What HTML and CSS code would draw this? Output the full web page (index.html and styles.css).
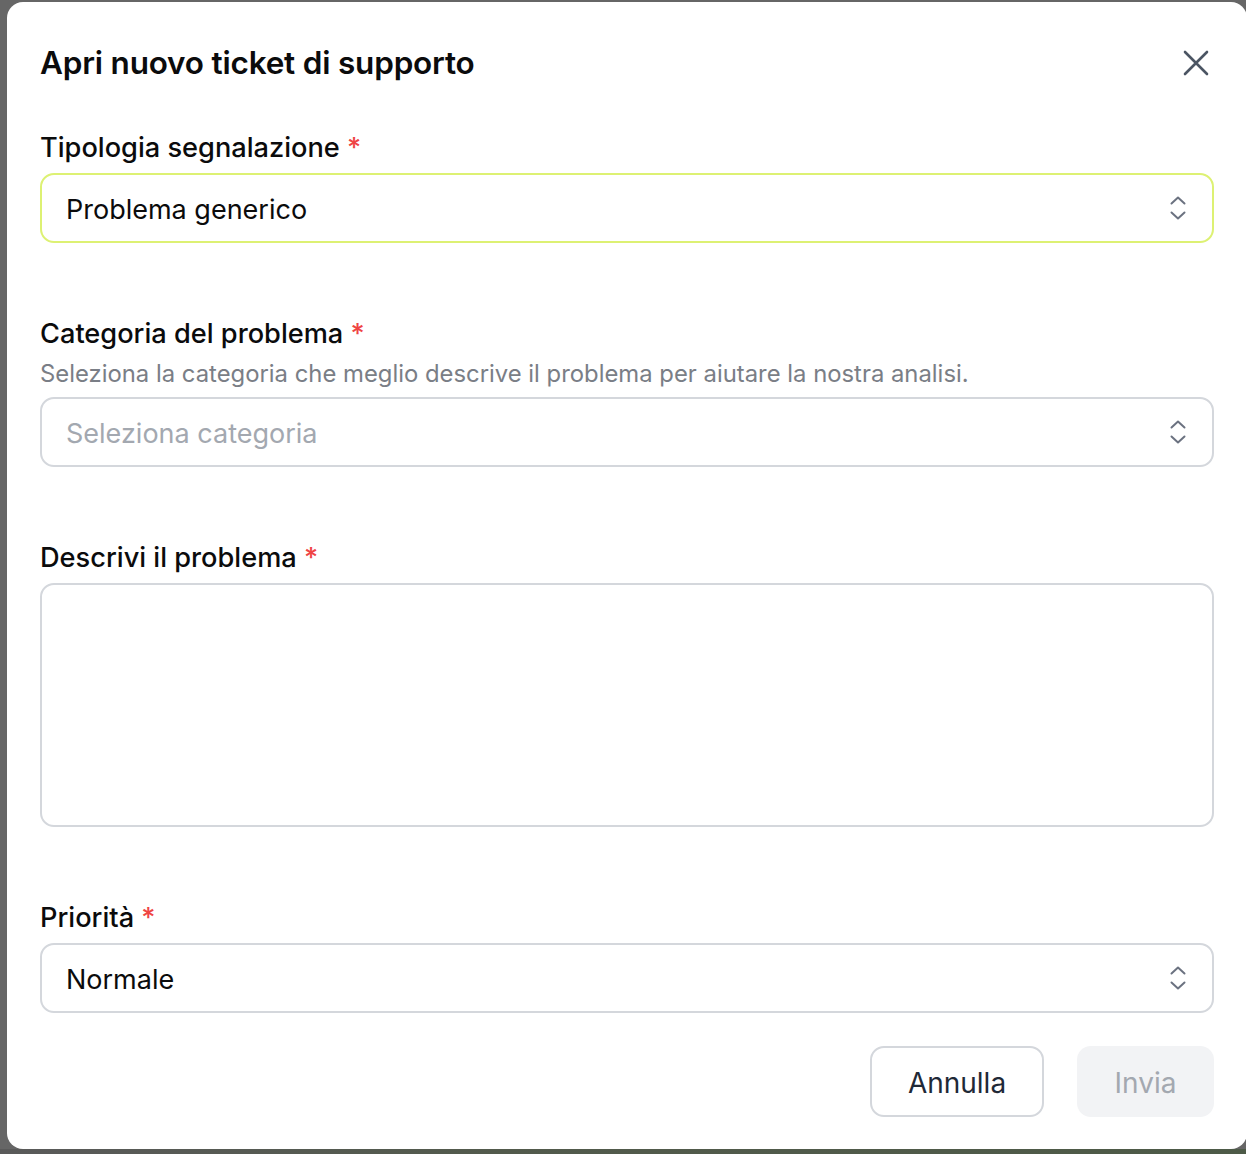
FILE: index.html
```html
<!DOCTYPE html>
<html lang="it">
<head>
<meta charset="utf-8">
<title>Apri nuovo ticket di supporto</title>
<link rel="stylesheet" href="styles.css">
</head>
<body>
<div class="backdrop">
  <div class="modal" role="dialog" aria-labelledby="dlg-title">
    <div class="modal-header">
      <h2 id="dlg-title" class="modal-title">Apri nuovo ticket di supporto</h2>
      <button class="close-btn" aria-label="Chiudi">
        <svg width="26" height="26" viewBox="0 0 26 26" fill="none" stroke="currentColor" stroke-width="2.6" stroke-linecap="round"><path d="M2 2L24 24M24 2L2 24"/></svg>
      </button>
    </div>

    <div class="field">
      <label class="label">Tipologia segnalazione <span class="req">*</span></label>
      <div class="select focused">
        <span class="value">Problema generico</span>
        <svg class="chev" width="18" height="28" viewBox="0 0 18 28" fill="none" stroke="currentColor" stroke-width="2" stroke-linecap="round" stroke-linejoin="round"><path d="M2.5 9.5L9 3.5L15.5 9.5M2.5 18.5L9 24.5L15.5 18.5"/></svg>
      </div>
    </div>

    <div class="field">
      <label class="label">Categoria del problema <span class="req">*</span></label>
      <p class="help">Seleziona la categoria che meglio descrive il problema per aiutare la nostra analisi.</p>
      <div class="select">
        <span class="value placeholder">Seleziona categoria</span>
        <svg class="chev" width="18" height="28" viewBox="0 0 18 28" fill="none" stroke="currentColor" stroke-width="2" stroke-linecap="round" stroke-linejoin="round"><path d="M2.5 9.5L9 3.5L15.5 9.5M2.5 18.5L9 24.5L15.5 18.5"/></svg>
      </div>
    </div>

    <div class="field">
      <label class="label">Descrivi il problema <span class="req">*</span></label>
      <textarea class="textarea"></textarea>
    </div>

    <div class="field field-last">
      <label class="label">Priorità <span class="req">*</span></label>
      <div class="select">
        <span class="value">Normale</span>
        <svg class="chev" width="18" height="28" viewBox="0 0 18 28" fill="none" stroke="currentColor" stroke-width="2" stroke-linecap="round" stroke-linejoin="round"><path d="M2.5 9.5L9 3.5L15.5 9.5M2.5 18.5L9 24.5L15.5 18.5"/></svg>
      </div>
    </div>

    <div class="actions">
      <button class="btn btn-outline">Annulla</button>
      <button class="btn btn-disabled" disabled>Invia</button>
    </div>
  </div>
  <div class="bottom-strip"></div>
</div>
</body>
</html>
```

FILE: styles.css
```css
html, body {
  margin: 0;
  padding: 0;
  background: #666666;
}

body {
  font-family: Inter, "Noto Sans", "Liberation Sans", sans-serif;
  color: #0b0b0c;
  overflow: hidden;
}

.backdrop {
  width: 1246px;
  height: 1154px;
  display: flex;
  flex-direction: column;
}

.modal {
  box-sizing: border-box;
  width: 1240px;
  height: 1147px;
  margin: 2px 0 0 7px;
  padding: 35px 33px 32px 33px;
  background: #ffffff;
  border-radius: 16px;
  display: flex;
  flex-direction: column;
}

.bottom-strip {
  flex: 1;
  background: linear-gradient(90deg, #5a5a5a 0%, #525a4c 40%, #4d5a47 100%);
}

.modal-header {
  height: 56px;
  display: flex;
  align-items: center;
  justify-content: space-between;
  margin-bottom: 39px;
}

.modal-title {
  margin: 0;
  font-size: 31.5px;
  line-height: 40px;
  font-weight: 600;
  letter-spacing: -0.2px;
  color: #0b0b0c;
}

.close-btn {
  border: 0;
  background: transparent;
  padding: 0;
  margin-right: 5px;
  width: 26px;
  height: 26px;
  color: #4b5563;
  display: flex;
  align-items: center;
  justify-content: center;
}

.field {
  display: flex;
  flex-direction: column;
  margin-bottom: 71px;
}

.field-last {
  margin-bottom: 33px;
}

.label {
  font-size: 27.2px;
  line-height: 40px;
  font-weight: 500;
  color: #0b0b0c;
  margin-bottom: 5px;
  padding-top: 3px;
  margin-top: -3px;
}

.req {
  color: #ef4444;
}

.help {
  margin: -1px 0 7px 0;
  font-size: 23.85px;
  line-height: 32px;
  color: #7a7e86;
}

.select {
  box-sizing: border-box;
  height: 70px;
  border: 2px solid #d4d7dc;
  border-radius: 14px;
  padding: 0 25px 0 24px;
  display: flex;
  align-items: center;
  justify-content: space-between;
  background: #ffffff;
}

.select.focused {
  border-color: #ddf173;
}

.value {
  font-size: 27px;
  line-height: 36px;
  color: #0b0b0c;
  padding-top: 3px;
}

.value.placeholder {
  color: #a3a8b0;
}

.chev {
  color: #6b7280;
}

.textarea {
  box-sizing: border-box;
  height: 244px;
  border: 2px solid #d4d7dc;
  border-radius: 14px;
  resize: none;
  padding: 20px 24px;
  font-family: inherit;
  font-size: 27px;
  outline: none;
}

.actions {
  display: flex;
  justify-content: flex-end;
  gap: 33px;
}

.btn {
  box-sizing: border-box;
  height: 71px;
  border-radius: 14px;
  font-family: inherit;
  font-size: 28px;
  font-weight: 400;
  padding: 2px 0 0 0;
}

.btn-outline {
  width: 174px;
  background: #ffffff;
  border: 2px solid #d4d7dc;
  color: #1f2937;
}

.btn-disabled {
  width: 137px;
  background: #f2f3f5;
  border: 0;
  color: #a3a8b0;
}
```
